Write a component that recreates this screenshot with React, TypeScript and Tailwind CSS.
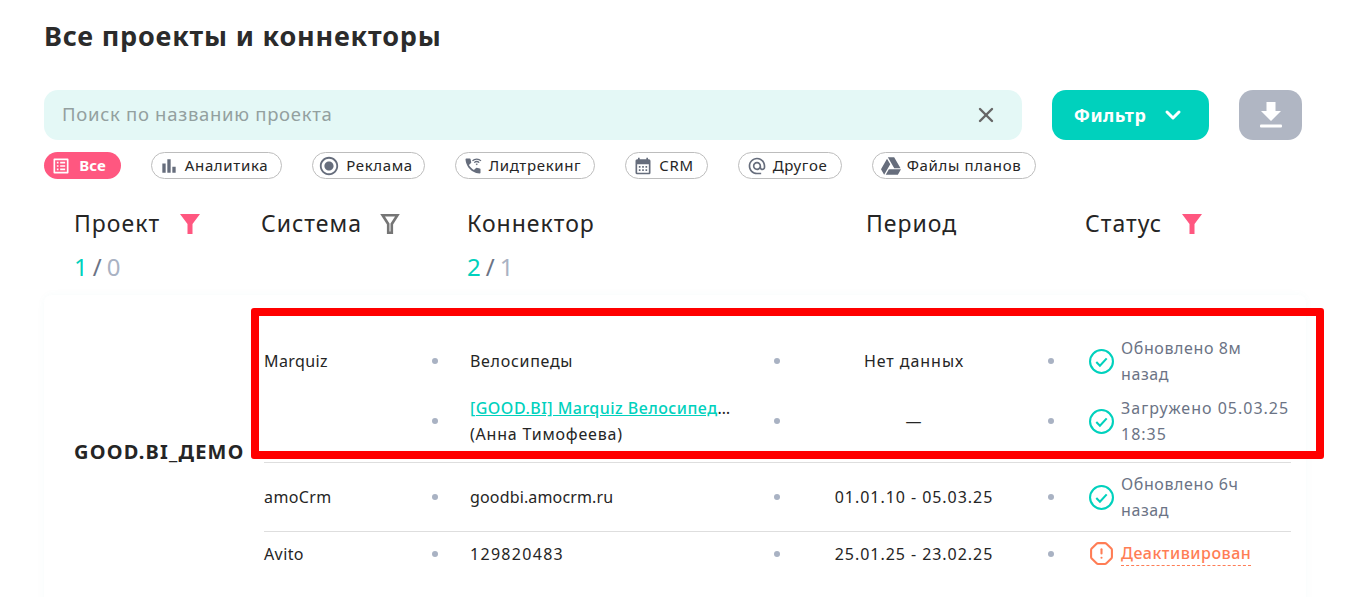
import React from "react";
import { X, ChevronDown, OctagonAlert } from "lucide-react";
import { FaGoogleDrive } from "react-icons/fa";
import { MdAlternateEmail, MdCalendarMonth, MdOutlineListAlt, MdRadioButtonChecked, MdBarChart, MdWifiCalling3 } from "react-icons/md";

const chips = [
  { label: "Аналитика", icon: <MdBarChart className="w-[20px] h-[20px]" />, width: "w-[131px]" },
  { label: "Реклама", icon: <MdRadioButtonChecked className="w-[22px] h-[22px]" />, width: "w-[113px]" },
  { label: "Лидтрекинг", icon: <MdWifiCalling3 className="w-[20px] h-[20px]" />, width: "w-[140px]" },
  { label: "CRM", icon: <MdCalendarMonth className="w-[20px] h-[20px]" />, width: "w-[83px]" },
  { label: "Другое", icon: <MdAlternateEmail className="w-[20px] h-[20px]" />, width: "w-[104px]" },
  { label: "Файлы планов", icon: <FaGoogleDrive className="w-[20px] h-[20px]" />, width: "w-[164px]" },
];

function Funnel({ active }: { active?: boolean }) {
  if (active) {
    return (
      <svg viewBox="0 0 20 20" className="w-[20px] h-[20px] mt-[2px]">
        <path d="M0 0h20L12.5 10v10h-5V10z" fill="#ff5780" />
      </svg>
    );
  }
  return (
    <svg viewBox="0 0 20 20" className="w-[20px] h-[20px] mt-[2px]">
      <path d="M2.600 1.300h14.800L11.800 10v8.700H8.200V10z" fill="none" stroke="#757575" strokeWidth="2.600" />
    </svg>
  );
}

function CheckIcon() {
  return (
    <svg viewBox="0 0 24 24" className="w-[25px] h-[25px] shrink-0" fill="none" stroke="#00d1bd">
      <circle cx="12" cy="12" r="11" strokeWidth="2" />
      <path d="M7 12.500l3.500 3.500 6.500-7" strokeWidth="2" />
    </svg>
  );
}

function Dot() {
  return (
    <div className="flex justify-center">
      <span className="w-[6px] h-[6px] rounded-full bg-[#a9b2c3]" />
    </div>
  );
}

function Row({
  system,
  connector,
  period,
  status,
  className,
}: {
  system: string;
  connector: React.ReactNode;
  period: string;
  status: React.ReactNode;
  className: string;
}) {
  return (
    <div className={`grid grid-cols-[167px_8px_334px_8px_266px_8px_1fr] items-center ${className}`}>
      <div className="tracking-[0.4px]">{system}</div>
      <Dot />
      <div className="pl-[31px]">{connector}</div>
      <Dot />
      <div className="text-center tracking-[0.95px]">{period}</div>
      <Dot />
      <div className="pl-[34px]">{status}</div>
    </div>
  );
}

function Status({ children }: { children: React.ReactNode }) {
  return (
    <div className="flex items-center gap-[7px]">
      <CheckIcon />
      <div className="text-[#6b7385] leading-[26px] tracking-[0.6px] whitespace-nowrap">{children}</div>
    </div>
  );
}

export default function App() {
  return (
    <div
      className="relative h-[597px] overflow-hidden bg-white text-[16px] text-[#252525]"
      style={{ fontFamily: '"Noto Sans", sans-serif' }}
    >
      <div className="px-[44px] pt-[18px]">
        <h1 className="text-[27px] leading-[36px] font-bold tracking-[0.8px] text-[#2b2b2b]">Все проекты и коннекторы</h1>

        {/* поиск */}
        <div className="flex mt-[36px]">
          <div className="w-[978px] h-[50px] rounded-[14px] bg-[#e4f8f6] flex items-center justify-between pl-[18px] pr-[24px]">
            <span className="text-[18.500px] tracking-[0.7px] text-[#93a09f] -mt-[2px]">Поиск по названию проекта</span>
            <X className="w-[24px] h-[24px] text-[#666]" strokeWidth={2.4} />
          </div>
          <button className="ml-[30px] w-[157px] h-[50px] rounded-[14px] bg-[#00d1bd] text-white text-[18px] tracking-[0.5px] font-bold flex items-center justify-center gap-[15px] pr-[2px]">
            Фильтр
            <ChevronDown className="w-[24px] h-[24px]" strokeWidth={3} />
          </button>
          <button className="ml-[30px] w-[63px] h-[50px] rounded-[14px] bg-[#b0b6c3] flex items-center justify-center">
            <svg viewBox="0 0 22 26" className="w-[22px] h-[26px]" fill="white">
              <path d="M6.500 0h9v9H21L11 19 1 9h5.500z" />
              <rect y="22.500" width="22" height="3" rx="1" />
            </svg>
          </button>
        </div>

        {/* фильтры */}
        <div className="flex items-center mt-[12px] gap-[30px]">
          <div className="w-[77px] h-[27px] rounded-full bg-[#ff5780] text-white text-[15px] font-bold flex items-center justify-center gap-[8px] pr-[8px]">
            <MdOutlineListAlt className="w-[20px] h-[20px]" />
            Все
          </div>
          <div className="flex items-center gap-[30px]">
            {chips.map((chip) => (
              <div
                key={chip.label}
                className={`${chip.width} h-[27px] rounded-full border border-[#bdbdbd] text-[15px] tracking-[0.65px] flex items-center justify-center gap-[6px] pr-[6px]`}
              >
                <span className="text-[#666d7c]">{chip.icon}</span>
                {chip.label}
              </div>
            ))}
          </div>
        </div>

        {/* шапка таблицы */}
        <div className="flex items-start mt-[27px] pl-[30px] text-[23px] tracking-[1px] leading-[34px]">
          <div className="w-[187px]">
            <div className="flex items-center gap-[20px]">
              Проект
              <Funnel active />
            </div>
            <div className="mt-[10px] text-[24px]">
              <span className="text-[#00d1bd]">1</span>
              <span className="text-[#6b7385] mx-[4px]">/</span>
              <span className="text-[#a9b2c3]">0</span>
            </div>
          </div>
          <div className="w-[206px]">
            <div className="flex items-center gap-[18px]">
              Система
              <Funnel />
            </div>
          </div>
          <div className="w-[399px]">
            <div>Коннектор</div>
            <div className="mt-[10px] text-[24px]">
              <span className="text-[#00d1bd]">2</span>
              <span className="text-[#6b7385] mx-[4px]">/</span>
              <span className="text-[#a9b2c3]">1</span>
            </div>
          </div>
          <div className="w-[219px]">Период</div>
          <div className="flex items-center gap-[20px]">
            Статус
            <Funnel active />
          </div>
        </div>

        {/* проект */}
        <div className="flex mt-[11px] w-[1262px] h-[320px] rounded-[8px] shadow-[0_0_8px_rgba(0,160,150,0.04)]">
          <div className="w-[220px] pl-[30px] pt-[142px] text-[20px] tracking-[1.2px] leading-[30px] font-bold shrink-0">GOOD.BI_ДЕМО</div>
          <div className="w-[1027px] pt-[36px]">
            <Row
              className="h-[60px]"
              system="Marquiz"
              connector={<div className="tracking-[0.7px]">Велосипеды</div>}
              period="Нет данных"
              status={
                <Status>
                  Обновлено 8м
                  <br />
                  назад
                </Status>
              }
            />
            <Row
              className="h-[60px]"
              system=""
              connector={
                <div className="w-[267px] leading-[26px]">
                  <div className="truncate tracking-[0.47px]">
                    <span className="text-[#00d1bd] font-medium underline">[GOOD.BI] Marquiz Велосипеды и самокаты</span>
                  </div>
                  <div className="tracking-[0.8px]">(Анна Тимофеева)</div>
                </div>
              }
              period="—"
              status={
                <Status>
                  <span className="tracking-[1px]">Загружено 05.03.25</span>
                  <br />
                  <span className="tracking-[1px]">18:35</span>
                </Status>
              }
            />
            <Row
              className="h-[69px] mt-[11px] border-t border-[#dedede]"
              system="amoCrm"
              connector={<div className="tracking-[0.15px]">goodbi.amocrm.ru</div>}
              period="01.01.10 - 05.03.25"
              status={
                <Status>
                  Обновлено 6ч
                  <br />
                  назад
                </Status>
              }
            />
            <Row
              className="h-[44px] border-t border-[#dedede]"
              system="Avito"
              connector={<div className="tracking-[1.3px]">129820483</div>}
              period="25.01.25 - 23.02.25"
              status={
                <div className="flex items-center gap-[7px]">
                  <OctagonAlert className="w-[25px] h-[25px] text-[#ff7d55]" strokeWidth={2} />
                  <span className="text-[#ff7d55] font-medium tracking-[0.5px] border-b border-dashed border-[#ff7d55] leading-[24px]">Деактивирован</span>
                </div>
              }
            />
          </div>
        </div>
      </div>

      {/* красная рамка поверх таблицы */}
      <div className="absolute left-[251px] top-[308px] w-[1073px] h-[151px] border-[8px] border-[#ff0000] rounded-[3px] pointer-events-none" />
    </div>
  );
}
